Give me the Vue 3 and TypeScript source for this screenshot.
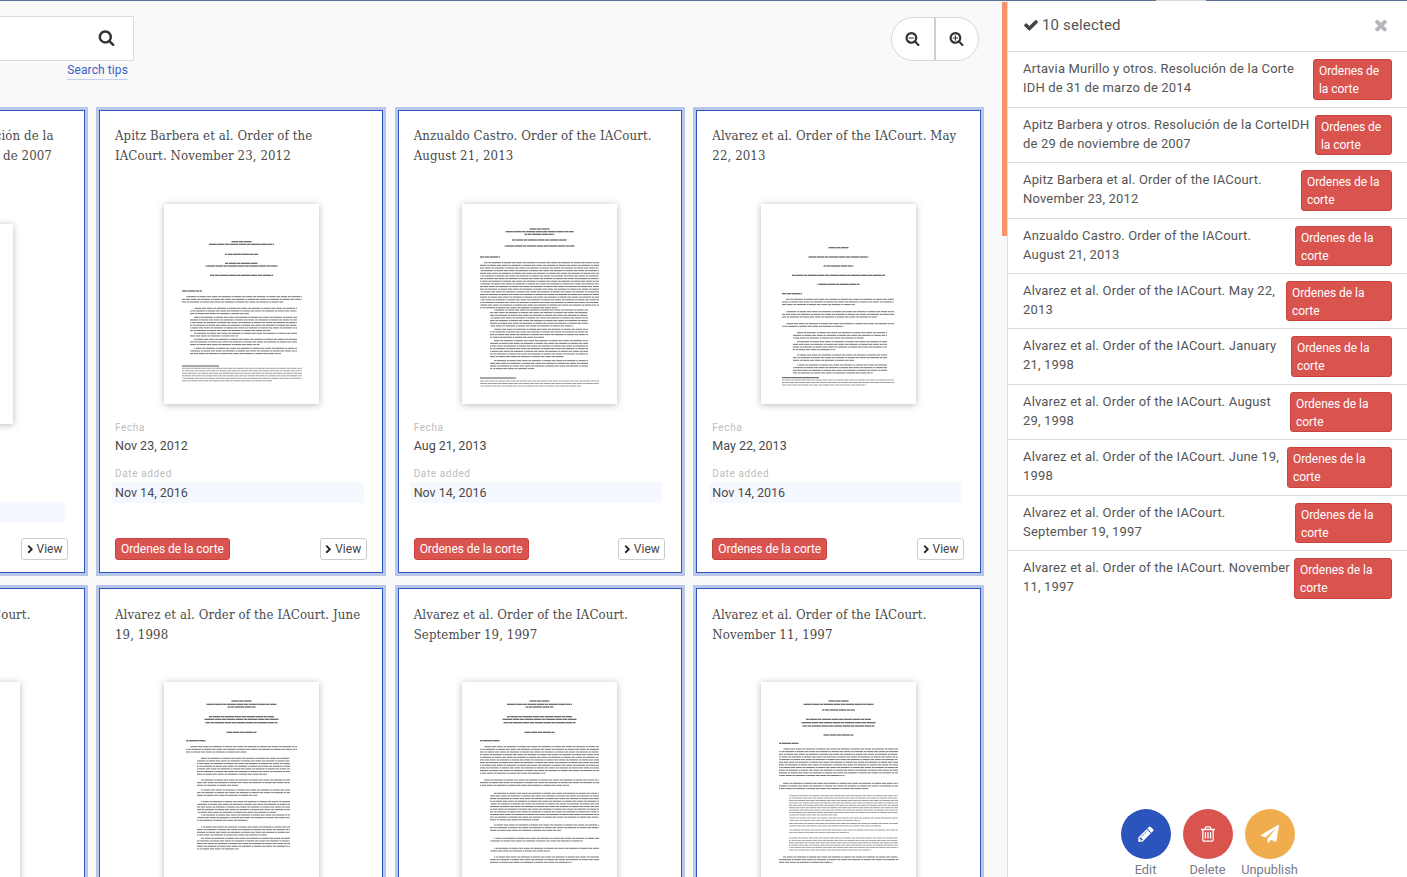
<script setup lang="ts">
type Block = [number, number, number, number, number?, string?];
interface Card { title: string; date: string; offset?: boolean; narrow?: boolean; doc: Block[] }

const P = {
  search: 'M1216 832q0-185-131.500-316.500t-316.500-131.500-316.500 131.500-131.500 316.500 131.500 316.500 316.500 131.500 316.500-131.500 131.500-316.500zm512 832q0 52-38 90t-90 38q-54 0-90-38l-343-342q-179 124-399 124-143 0-273.500-55.500t-225-150-150-225-55.500-273.500 55.500-273.500 150-225 225-150 273.500-55.500 273.500 55.500 225 150 150 225 55.500 273.500q0 220-124 399l343 343q37 37 37 90z',
  minus: 'M1088 800v64q0 13-9.500 22.500t-22.500 9.500h-576q-13 0-22.500-9.500t-9.500-22.500v-64q0-13 9.500-22.500t22.500-9.500h576q13 0 22.500 9.500t9.500 22.500zm128 32q0-185-131.500-316.500t-316.500-131.500-316.500 131.500-131.500 316.500 131.500 316.500 316.500 131.500 316.500-131.500 131.500-316.500zm512 832q0 53-37.500 90.500t-90.500 37.500q-54 0-90-38l-343-342q-179 124-399 124-143 0-273.500-55.500t-225-150-150-225-55.500-273.500 55.500-273.500 150-225 225-150 273.500-55.500 273.500 55.500 225 150 150 225 55.500 273.500q0 220-124 399l343 343q37 37 37 90z',
  plus: 'M1088 800v64q0 13-9.500 22.500t-22.500 9.500h-224v224q0 13-9.500 22.500t-22.500 9.500h-64q-13 0-22.500-9.500t-9.500-22.500v-224h-224q-13 0-22.500-9.500t-9.500-22.500v-64q0-13 9.500-22.500t22.500-9.500h224v-224q0-13 9.500-22.500t22.500-9.500h64q13 0 22.500 9.500t9.500 22.500v224h224q13 0 22.500 9.500t9.500 22.500zm128 32q0-185-131.500-316.500t-316.500-131.500-316.500 131.500-131.500 316.500 131.500 316.500 316.500 131.500 316.500-131.500 131.500-316.500zm512 832q0 53-37.500 90.500t-90.500 37.500q-54 0-90-38l-343-342q-179 124-399 124-143 0-273.500-55.500t-225-150-150-225-55.500-273.500 55.500-273.500 150-225 225-150 273.500-55.500 273.500 55.500 225 150 150 225 55.500 273.500q0 220-124 399l343 343q37 37 37 90z',
  check: 'M1671 566q0 40-28 68l-724 724-136 136q-28 28-68 28t-68-28l-136-136-362-362q-28-28-28-68t28-68l136-136q28-28 68-28t68 28l294 295 656-657q28-28 68-28t68 28l136 136q28 28 28 68z',
  times: 'M1490 1322q0 40-28 68l-136 136q-28 28-68 28t-68-28l-294-294-294 294q-28 28-68 28t-68-28l-136-136q-28-28-28-68t28-68l294-294-294-294q-28-28-28-68t28-68l136-136q28-28 68-28t68 28l294 294 294-294q28-28 68-28t68 28l136 136q28 28 28 68t-28 68l-294 294 294 294q28 28 28 68z',
  chevron: 'M1363 877l-742 742q-19 19-45 19t-45-19l-166-166q-19-19-19-45t19-45l531-531-531-531q-19-19-19-45t19-45l166-166q19-19 45-19t45 19l742 742q19 19 19 45t-19 45z',
  pencil: 'M491 1536l91-91-235-235-91 91v107h128v128h107zm523-928q0-22-22-22-10 0-17 7l-542 542q-7 7-7 17 0 22 22 22 10 0 17-7l542-542q7-7 7-17zm-54-192l416 416-832 832h-416v-416zm683 96q0 53-37 90l-166 166-416-416 166-165q36-38 90-38 53 0 91 38l235 234q37 39 37 91z',
  trash: 'M704 736v576q0 14-9 23t-23 9h-64q-14 0-23-9t-9-23v-576q0-14 9-23t23-9h64q14 0 23 9t9 23zm256 0v576q0 14-9 23t-23 9h-64q-14 0-23-9t-9-23v-576q0-14 9-23t23-9h64q14 0 23 9t9 23zm256 0v576q0 14-9 23t-23 9h-64q-14 0-23-9t-9-23v-576q0-14 9-23t23-9h64q14 0 23 9t9 23zm128 724v-948h-896v948q0 22 7 40.500t14.500 27 10.500 8.500h832q3 0 10.500-8.500t14.500-27 7-40.500zm-672-1076h448l-48-117q-7-9-17-11h-317q-10 2-17 11zm928 32v64q0 14-9 23t-23 9h-96v948q0 83-47 143.500t-113 60.500h-832q-66 0-113-58.500t-47-141.500v-952h-96q-14 0-23-9t-9-23v-64q0-14 9-23t23-9h309l70-167q15-37 54-63t79-26h320q40 0 79 26t54 63l70 167h309q14 0 23 9t9 23z',
  plane: 'M1764 11q33 24 27 64l-256 1536q-5 29-32 45-14 8-31 8-11 0-24-5l-453-185-242 295q-18 23-49 23-13 0-22-4-19-7-30.500-23.500t-11.500-36.500v-349l864-1059-1069 925-395-162q-37-14-40-55-2-40 32-59l1664-960q15-9 32-9 20 0 36 11z'
};

// [y, x0, x1, line count, step, kind]  kind: h heading, r rule, f fine print
const h = (y: number, w: number): Block => [y, 77.5 - w / 2, 77.5 + w / 2, 1, 0, 'h'];
const seen = (y: number, x = 18): Block => [y, x, x + 20, 1, 0, 'h'];

const doc1: Block[] = [h(37.7, 20), h(40.3, 65), h(50.3, 33), h(59.3, 33), h(62, 72), h(71.3, 63), seen(87),
  [92.7, 18, 138, 3], [104.3, 26, 133, 3], [113.3, 26, 133, 6], [129.3, 26, 133, 2], [135.3, 26, 133, 3], [144.3, 26, 133, 3],
  [162, 18, 55, 1, 0, 'r'], [164.3, 18, 138, 6, 2.5, 'f']];
const doc2: Block[] = [h(25, 20), h(27.7, 68), h(30.3, 30), h(36, 55), h(42, 70), seen(53),
  [58.7, 18, 137, 18], [106, 28, 126, 7], [125.3, 28, 126, 4], [136.7, 28, 126, 7], [156.7, 28, 126, 4],
  [174, 18, 54, 1, 0, 'r'], [177, 18, 137, 3, 2.5, 'f']];
const doc3: Block[] = [h(43.7, 20), h(53, 60), h(62, 30), h(71.3, 93), h(80.3, 42), seen(89.7, 21),
  [95.3, 21, 133, 3], [107.7, 21, 133, 3], [119.7, 21, 133, 2], [128.7, 32, 126, 3], [137.7, 32, 126, 4], [151, 32, 126, 3], [161, 32, 126, 4],
  [173.7, 21, 58, 1, 0, 'r'], [176, 21, 133, 3, 2.5, 'f']];
const doc4: Block[] = [h(19, 20), h(22.3, 70), h(25, 28), h(34.7, 65), h(37.3, 75), h(40.7, 72), h(50.3, 30), seen(58.7, 22),
  [64.7, 22, 133, 3], [76.3, 33, 126, 7], [98, 33, 126, 3], [108, 33, 126, 3], [119.7, 33, 126, 5], [133, 33, 126, 3], [145, 33, 126, 4], [156.3, 33, 126, 5]];
const doc5: Block[] = [h(19, 20), h(22.3, 65), h(25, 28), h(34.7, 65), h(37.3, 75), h(40.7, 72), h(50.3, 30), seen(58.7),
  [64.7, 18, 137, 11], [98, 18, 137, 3], [111.3, 28, 137, 11], [143, 28, 137, 3], [156.3, 28, 137, 2], [166.3, 28, 137, 2], [175, 28, 137, 3]];
const doc6: Block[] = [h(19, 20), h(22.3, 70), h(28, 33), h(37.3, 65), h(40.7, 75), h(44, 72), h(53, 30), seen(61.3),
  [67, 18, 137, 11], [101.3, 18, 137, 3], [113.7, 28, 137, 9, 2.4, 'f'], [136, 28, 137, 2, 2.4, 'f'], [141.5, 28, 137, 2, 2.4, 'f'], [148, 28, 137, 2, 2.4, 'f'], [156, 28, 137, 6, 2.4, 'f'], [175, 18, 137, 3]];

const cards: Card[] = [
  { title: 'Apitz Barbera y otros. Resolución de la\nCorteIDH de 29 de noviembre de 2007', date: 'Nov 23, 2012', offset: true, narrow: true, doc: [] },
  { title: 'Apitz Barbera et al. Order of the\nIACourt. November 23, 2012', date: 'Nov 23, 2012', doc: doc1 },
  { title: 'Anzualdo Castro. Order of the IACourt.\nAugust 21, 2013', date: 'Aug 21, 2013', doc: doc2 },
  { title: 'Alvarez et al. Order of the IACourt. May\n22, 2013', date: 'May 22, 2013', doc: doc3 },
  { title: 'Alvarez et al. Order of the IACourt.\nAugust 29, 1998', date: 'Aug 29, 1998', doc: [] },
  { title: 'Alvarez et al. Order of the IACourt. June\n19, 1998', date: 'Jun 19, 1998', doc: doc4 },
  { title: 'Alvarez et al. Order of the IACourt.\nSeptember 19, 1997', date: 'Sep 19, 1997', doc: doc5 },
  { title: 'Alvarez et al. Order of the IACourt.\nNovember 11, 1997', date: 'Nov 11, 1997', doc: doc6 }
];

function lines(doc: Block[]) {
  const out: { x1: number; x2: number; y: number; cls: string; off: number }[] = [];
  doc.forEach(([y, x0, x1, n, step, kind], bi) => {
    for (let i = 0; i < n; i++) {
      const last = i === n - 1 && n > 1;
      out.push({
        x1: x0 + (i === 0 && !kind && n > 1 ? 4 : 0),
        x2: last ? x0 + (x1 - x0) * (0.45 + ((bi * 7) % 5) * 0.1) : x1,
        y: y + i * (step || 2.65),
        cls: kind || 'b',
        off: (bi * 13 + i * 17) % 41
      });
    }
  });
  return out;
}

const selected = [
  { text: 'Artavia Murillo y otros. Resolución de la Corte\nIDH de 31 de marzo de 2014', w: 79 },
  { text: 'Apitz Barbera y otros. Resolución de la CorteIDH\nde 29 de noviembre de 2007', w: 77 },
  { text: 'Apitz Barbera et al. Order of the IACourt.\nNovember 23, 2012', w: 91 },
  { text: 'Anzualdo Castro. Order of the IACourt.\nAugust 21, 2013', w: 97 },
  { text: 'Alvarez et al. Order of the IACourt. May 22,\n2013', w: 106 },
  { text: 'Alvarez et al. Order of the IACourt. January\n21, 1998', w: 101 },
  { text: 'Alvarez et al. Order of the IACourt. August\n29, 1998', w: 102 },
  { text: 'Alvarez et al. Order of the IACourt. June 19,\n1998', w: 105 },
  { text: 'Alvarez et al. Order of the IACourt.\nSeptember 19, 1997', w: 97 },
  { text: 'Alvarez et al. Order of the IACourt. November\n11, 1997', w: 98 }
];

const actions = [
  { label: 'Edit', cls: 'blue', icon: P.pencil },
  { label: 'Delete', cls: 'red', icon: P.trash },
  { label: 'Unpublish', cls: 'orange', icon: P.plane }
];
</script>

<template>
  <div class="app">
    <div class="topline"><i class="seg-a"></i><i class="seg-b"></i></div>
    <div class="body">
      <main class="main">
        <div class="toolbar">
          <div class="search-wrap">
            <div class="search">
              <svg class="search-icon" viewBox="0 0 1792 1792"><path :d="P.search" /></svg>
            </div>
            <a class="tips">Search tips</a>
          </div>
          <div class="zoom">
            <button class="zoom-btn"><svg viewBox="0 0 1792 1792"><path :d="P.minus" /></svg></button>
            <button class="zoom-btn"><svg viewBox="0 0 1792 1792"><path :d="P.plus" /></svg></button>
          </div>
        </div>

        <div class="grid">
          <article v-for="(c, i) in cards" :key="i" class="card">
            <h3 class="title">{{ c.title }}</h3>
            <div class="thumb" :class="{ offset: c.offset, narrow: c.narrow }">
              <svg viewBox="0 0 155 200" width="100%" height="100%" preserveAspectRatio="xMidYMin slice">
                <line
                  v-for="(l, j) in lines(c.doc)" :key="j"
                  :class="'t-' + l.cls"
                  :x1="l.x1" :x2="l.x2" :y1="l.y" :y2="l.y"
                  :stroke-dashoffset="l.off"
                />
              </svg>
            </div>
            <div class="meta">
              <div class="label">Fecha</div>
              <div class="value">{{ c.date }}</div>
              <div class="label second">Date added</div>
              <div class="value strip">Nov 14, 2016</div>
            </div>
            <div class="foot">
              <span class="tag">Ordenes de la corte</span>
              <button class="view">
                <svg viewBox="0 0 1792 1792"><path :d="P.chevron" /></svg>View
              </button>
            </div>
          </article>
        </div>
      </main>

      <div class="scroll"><div class="thumbbar"></div></div>

      <aside class="side">
        <header class="side-head">
          <svg class="check" viewBox="0 0 1792 1792"><path :d="P.check" /></svg>
          <span class="count">10 selected</span>
          <svg class="close" viewBox="0 0 1792 1792"><path :d="P.times" /></svg>
        </header>
        <ul class="list">
          <li v-for="(s, i) in selected" :key="i" class="row">
            <span class="row-text">{{ s.text }}</span>
            <span class="row-tag" :style="{ width: s.w + 'px' }">Ordenes de la corte</span>
          </li>
        </ul>
        <div class="actions">
          <div v-for="a in actions" :key="a.label" class="action">
            <span class="circle" :class="a.cls"><svg viewBox="0 0 1792 1792"><path :d="a.icon" /></svg></span>
            <span class="action-label">{{ a.label }}</span>
          </div>
        </div>
      </aside>
    </div>
  </div>
</template>

<style>
html, body { margin: 0; background: #f9f9f9; overflow: hidden; }
</style>

<style scoped>
.app {
  width: 1407px; height: 877px; overflow: hidden; display: flex; flex-direction: column;
  background: #f9f9f9; font-family: Roboto, "Liberation Sans", sans-serif; color: #444;
}
.topline { height: 1px; flex: none; display: flex; background: #5a7195; }
.topline i { display: block; height: 1px; }
.seg-a { width: 1156px; }
.seg-b { width: 50px; background: #d8d8d8; }
.body { flex: 1; display: flex; min-height: 0; }
.main { width: 1002px; flex: none; overflow: hidden; }

.toolbar { height: 108.6px; display: flex; justify-content: space-between; align-items: flex-start; padding-right: 23px; box-sizing: border-box; }
.search-wrap { margin-top: 15px; width: 134px; display: flex; flex-direction: column; align-items: flex-end; }
.search {
  width: 100%; height: 45px; box-sizing: border-box; background: #fff;
  border: 1px solid #dcdcdc; border-left: 0; display: flex; align-items: center; justify-content: flex-end; padding: 0 18px 2px 0;
}
.search-icon { width: 17px; height: 17px; fill: #333; }
.tips {
  margin: 1px 6px 0 0; font-size: 12px; line-height: 17px; letter-spacing: .1px; color: #3a62c4; border-bottom: 1px solid #c2d0f0;
}
.zoom {
  margin-top: 16px; width: 88px; height: 44px; box-sizing: border-box; display: flex;
  background: #fff; border: 1px solid #d6d6d6; border-radius: 22px; overflow: hidden;
}
.zoom-btn { flex: 1; border: 0; background: none; padding: 0 1px 2px 0; display: flex; align-items: center; justify-content: center; }
.zoom-btn + .zoom-btn { border-left: 2px solid #cfcfcf; }
.zoom-btn svg { width: 15px; height: 15px; fill: #333; }

.grid {
  display: grid; grid-template-columns: repeat(4, 284.2px); gap: 15.1px 14.47px; margin-left: -199.67px;
}
.card {
  height: 463.6px; box-sizing: border-box; background: #fff; border: 1px solid #2c55bd;
  box-shadow: 0 0 0 3px #b8c6ea; padding: 15.4px 15.5px 12px 15px; display: flex; flex-direction: column;
}
.title {
  margin: 0; height: 41px; flex: none; font-family: "DejaVu Serif Condensed", "DejaVu Serif", serif;
  font-weight: 400; font-size: 13.1px; line-height: 20.5px; letter-spacing: .1px; color: #4a4a4a; white-space: pre;
}
.thumb {
  width: 155px; height: 200px; flex: none; align-self: center; margin: 36.6px 0 0; background: #fff;
  box-shadow: 0 1px 7px rgba(0, 0, 0, .28); position: relative; left: .3px;
}
.thumb.narrow { width: 141px; }
.thumb.offset { margin-top: 56.6px; }
.thumb svg { display: block; filter: blur(.32px); }
.thumb line { stroke: #404040; }
.t-b { stroke-width: .9; stroke-dasharray: 6 .7 3 .5 9 .7 2 .5 7 .6 4 .7; opacity: .78; }
.t-f { stroke-width: .75; stroke-dasharray: 5 .6 3 .5 7 .6 4 .5; opacity: .68; }
.t-h { stroke-width: 1.05; stroke-dasharray: 7 .5 4 .5 9 .5; opacity: 1; }
.t-r { stroke-width: .9; opacity: 1; }

.meta { margin-top: 17.4px; flex: none; }
.label { font-size: 10px; line-height: 14px; letter-spacing: .62px; color: #bdbdbd; }
.label.second { margin-top: 10px; }
.value { font-size: 12.5px; line-height: 22px; color: #4a4a4a; }
.strip { margin: 1px 3px 0 -3px; padding-left: 3px; background: #f5f8fe; height: 21px; line-height: 22px; }
.foot { margin-top: auto; display: flex; justify-content: space-between; align-items: center; }
.tag {
  height: 22px; box-sizing: border-box; padding: 0 5px; background: #d9534f; border: 1px solid #c9443f; border-radius: 3px;
  color: #fff; font-size: 12px; line-height: 21px; white-space: nowrap; letter-spacing: -.05px;
}
.view {
  height: 22px; width: 47px; box-sizing: border-box; padding: 0 1px 0 0; background: #fff; border: 1px solid #ccc; border-radius: 3px;
  display: flex; align-items: center; justify-content: center; gap: 2px;
  color: #444; font-family: inherit; font-size: 12px;
}
.view svg { width: 9px; height: 9px; fill: #222; }

.scroll { width: 5px; flex: none; margin-top: 1px; }
.thumbbar { height: 234px; background: #f6936b; }

.side {
  flex: 1; background: #fff; border-left: 1px solid #ddd; display: flex; flex-direction: column; min-width: 0;
}
.side-head { height: 51.2px; flex: none; box-sizing: border-box; border-bottom: 1px solid #ddd; display: flex; align-items: center; padding: 0 17px 2px 15px; }
.check { width: 16px; height: 16px; fill: #444; margin-right: 3px; }
.count { font-size: 15px; color: #555; letter-spacing: .15px; }
.close { width: 18px; height: 18px; fill: #b5b5bd; margin-left: auto; }
.list { list-style: none; margin: 0; padding: 0; }
.row {
  height: 55.44px; box-sizing: border-box; padding: 7px 15px 0 15px; display: flex; border-bottom: 1px solid #ddd;
}
.row:last-child { border-bottom: 0; }
.row-text { flex: 1; min-width: 0; white-space: pre; font-size: 13px; line-height: 19px; letter-spacing: .17px; color: #555; }
.row-tag {
  flex: none; height: 40.5px; box-sizing: border-box; padding: 2px 5px 0; background: #d9534f; border: 1px solid #c9443f; border-radius: 3px;
  color: #fff; font-size: 12px; line-height: 18px; letter-spacing: -.05px;
}
.actions { margin-top: auto; display: flex; justify-content: center; height: 68px; flex: none; }
.action { width: 62px; display: flex; flex-direction: column; align-items: center; }
.circle { width: 50px; height: 50px; border-radius: 50%; flex: none; display: flex; align-items: center; justify-content: center; }
.circle svg { width: 18px; height: 18px; fill: #fff; }
.blue { background: #2b54bd; }
.red { background: #d9534f; }
.orange { background: #f0ad4e; }
.action-label { margin-top: 2px; font-size: 12.8px; line-height: 18px; color: #7a7a8a; white-space: nowrap; }
</style>
